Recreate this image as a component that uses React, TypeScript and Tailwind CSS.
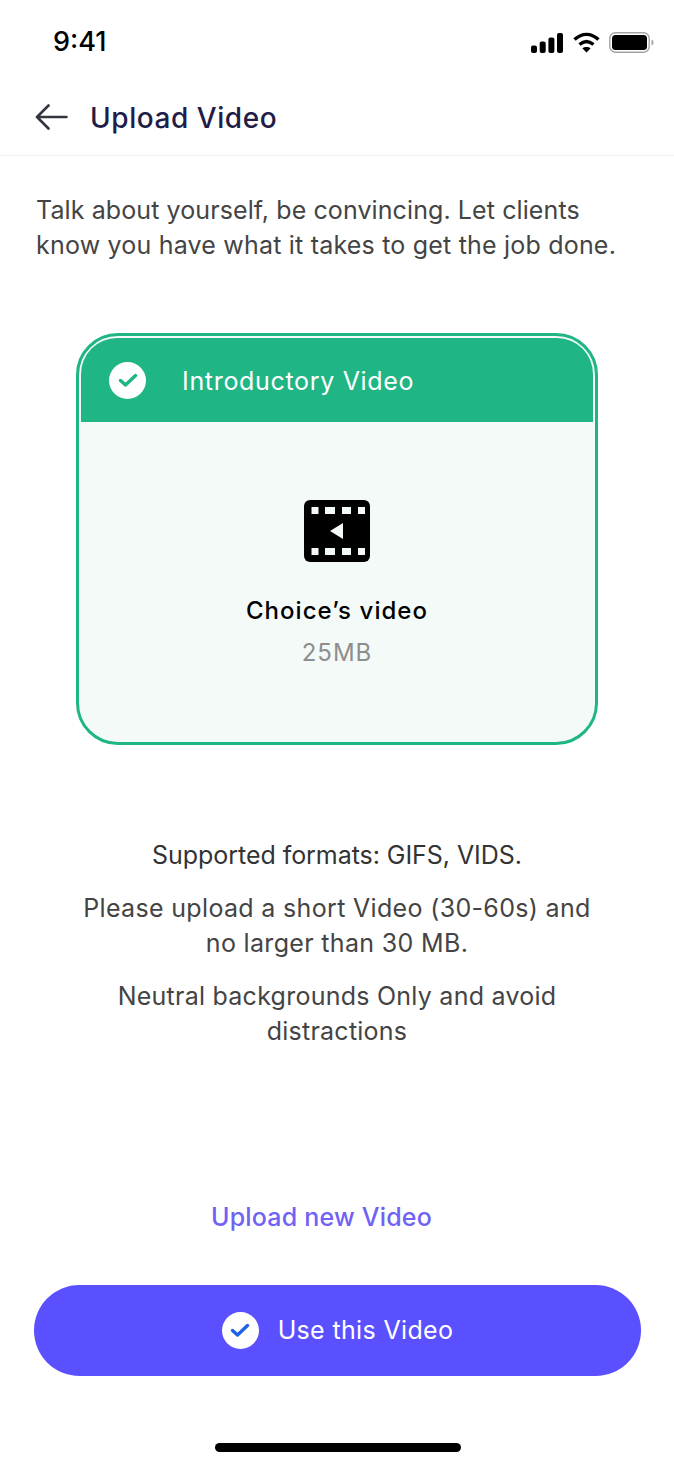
const font = "font-['Inter',sans-serif]";

const SignalIcons = () => (
  <div className="mt-[1px] flex items-center">
    <svg width="32" height="20" viewBox="0 0 32 20" fill="#000">
      <rect x="0" y="12.5" width="6" height="7.5" rx="2" />
      <rect x="8.7" y="8.5" width="6" height="11.5" rx="2" />
      <rect x="17.4" y="4.5" width="6" height="15.5" rx="2" />
      <rect x="26" y="0" width="6" height="20" rx="2" />
    </svg>
    <svg width="29" height="21" viewBox="0 0 28 21" fill="none" stroke="#000" strokeWidth="3.4" className="ml-[9px]">
      <path d="M2 7.5C9.5 .6 18.5 .6 26 7.5" />
      <path d="M7 12.5C11.5 8.6 16.5 8.6 21 12.5" />
      <path d="M14 20.5L9.8 16.3C12.2 14.4 15.8 14.4 18.2 16.3Z" fill="#000" stroke="none" />
    </svg>
    <svg width="45" height="21" viewBox="0 0 45 21" fill="none" className="ml-[8px]">
      <rect x="0.8" y="0.8" width="39.4" height="19.4" rx="5.5" stroke="#a3a3a3" strokeWidth="1.4" />
      <rect x="3" y="3" width="35" height="15" rx="3.5" fill="#000" />
      <path d="M42.5 7.5c1.5.5 2 1.6 2 3s-.5 2.5-2 3z" fill="#a3a3a3" />
    </svg>
  </div>
);

const Check = ({ color }: { color: string }) => (
  <div className="flex h-[37px] w-[37px] shrink-0 items-center justify-center rounded-full bg-white">
    <svg width="20" height="16" viewBox="0 0 20 16" fill="none" stroke={color} strokeWidth="3.4" strokeLinecap="round" strokeLinejoin="round">
      <path d="M2.5 8.5L7.5 13L17.5 3.5" />
    </svg>
  </div>
);

const FilmIcon = () => (
  <svg width="66" height="62" viewBox="0 0 66 62">
    <rect width="66" height="62" rx="6" fill="#000" />
    <g fill="#f4faf8">
      <rect x="7.5" y="7" width="7" height="7" />
      <rect x="21" y="7" width="10" height="7" />
      <rect x="38" y="7" width="9" height="7" />
      <rect x="54" y="7" width="7" height="7" />
      <rect x="7.5" y="48" width="7" height="7" />
      <rect x="21" y="48" width="10" height="7" />
      <rect x="38" y="48" width="9" height="7" />
      <rect x="54" y="48" width="7" height="7" />
      <path d="M26 31L39 23V39Z" />
    </g>
  </svg>
);

export default function App() {
  return (
    <div className={`${font} flex h-[1471px] w-[674px] flex-col overflow-hidden bg-white`}>
      <div className="flex h-[84px] items-center justify-between pl-[53px] pr-[20px]">
        <span className="mt-[1px] text-[27px] font-medium text-black">9:41</span>
        <SignalIcons />
      </div>

      <div className="flex h-[72px] items-center gap-[22px] border-b border-[#f1f1f3] pl-[35px] pb-[6px]">
        <svg width="33" height="26" viewBox="0 0 33 26" fill="none" stroke="#33363f" strokeWidth="2.6" strokeLinecap="round" strokeLinejoin="round">
          <path d="M31.5 13H2M13.5 1.5L2 13L13.5 24.5" />
        </svg>
        <h1 className="mt-[3px] text-[28px] font-medium tracking-[0.55px] text-[#211d47]">Upload Video</h1>
      </div>

      <p className="mt-[37px] px-[36px] text-[25px] leading-[35px] tracking-[0.2px] whitespace-nowrap text-[#444]">
        <span className="tracking-[0.1px]">Talk about yourself, be convincing. Let clients</span><br />know you have what it takes to get the job done.
      </p>

      <div className="mx-auto mt-[70px] flex h-[412px] w-[522px] flex-col overflow-hidden rounded-[42px] border-[3px] border-[#1fb585] bg-[#f4faf8] p-[2px]">
        <div className="flex h-[84px] items-center gap-[36px] rounded-t-[36px] bg-[#1fb585] pl-[28px]">
          <Check color="#1fb585" />
          <span className="mt-[3px] text-[25px] tracking-[0.68px] text-white">Introductory Video</span>
        </div>
        <div className="flex flex-col items-center pt-[78px]">
          <FilmIcon />
          <span className="mt-[31px] text-[24px] font-medium tracking-[1.05px] text-black">Choice’s video</span>
          <span className="mt-[6px] text-[24px] tracking-[1px] text-[#8e8e8e]">25MB</span>
        </div>
      </div>

      <div className="mt-[93px] flex flex-col items-center gap-[18px] text-center text-[25px] leading-[35px] tracking-[0.33px] text-[#444]">
        <p className="tracking-[-0.05px] text-[#333]">Supported formats: GIFS, VIDS.</p>
        <p>Please upload a short Video (30-60s) and<br />no larger than 30 MB.</p>
        <p className="tracking-[0.25px]">Neutral backgrounds Only and avoid<br />distractions</p>
      </div>

      <button className="mt-[150px] self-center pr-[31px] text-[25px] font-medium tracking-[0.2px] text-[#6f62f5]">Upload new Video</button>

      <button className="mt-[48px] ml-[34px] flex h-[91px] w-[607px] items-center justify-center gap-[19px] rounded-full bg-[#5a50ff]">
        <Check color="#1f62e8" />
        <span className="mt-[2px] text-[25px] tracking-[0.35px] text-white">Use this Video</span>
      </button>

      <div className="mt-[67px] ml-[215px] h-[9px] w-[246px] rounded-full bg-black" />
    </div>
  );
}
